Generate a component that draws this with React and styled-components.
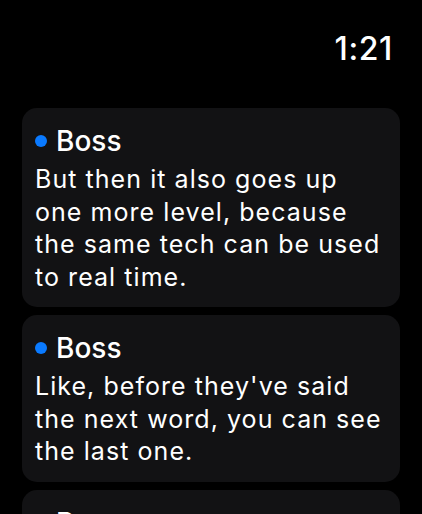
import React from "react";
import styled, { createGlobalStyle } from "styled-components";

const GlobalStyle = createGlobalStyle`
  html, body {
    margin: 0;
    padding: 0;
    background: #000;
  }
  body {
    font-family: Inter, "Noto Sans", sans-serif;
    -webkit-font-smoothing: antialiased;
  }
`;

const Screen = styled.div`
  width: 422px;
  height: 514px;
  overflow: hidden;
  display: flex;
  flex-direction: column;
  background: #000;
  color: #fff;
`;

const StatusBar = styled.div`
  flex-shrink: 0;
  display: flex;
  justify-content: flex-end;
  align-items: flex-start;
  height: 108px;
  padding: 31px 29px 0 0;
  box-sizing: border-box;
`;

const Clock = styled.span`
  font-size: 32px;
  line-height: 36px;
  font-weight: 500;
  letter-spacing: 0.6px;
`;

const List = styled.div`
  display: flex;
  flex-direction: column;
  gap: 8px;
  padding: 0 22px;
`;

const Card = styled.div`
  flex-shrink: 0;
  background: #121214;
  border-radius: 15px;
  padding: 16px 13px 14px 13px;
`;

const Speaker = styled.div`
  display: flex;
  align-items: center;
  gap: 9px;
  margin-bottom: 5px;
  font-size: 28px;
  line-height: 34px;
  font-weight: 500;
`;

const Dot = styled.span`
  width: 12px;
  height: 12px;
  border-radius: 50%;
  background: ${(p) => p.color};
`;

const Body = styled.p`
  margin: 0;
  font-size: 25px;
  line-height: 32.5px;
  letter-spacing: 1.05px;
`;

const lines = [
  {
    who: "Boss",
    text: "But then it also goes up one more level, because the same tech can be used to real time.",
  },
  {
    who: "Boss",
    text: "Like, before they've said the next word, you can see the last one.",
  },
  {
    who: "Boss",
    text: "And that changes how people talk.",
  },
];

export default function App() {
  return (
    <>
      <GlobalStyle />
      <Screen>
        <StatusBar>
          <Clock>1:21</Clock>
        </StatusBar>
        <List>
          {lines.map((l, i) => (
            <Card key={i}>
              <Speaker>
                <Dot color="#0a7aff" />
                {l.who}
              </Speaker>
              <Body>{l.text}</Body>
            </Card>
          ))}
        </List>
      </Screen>
    </>
  );
}
